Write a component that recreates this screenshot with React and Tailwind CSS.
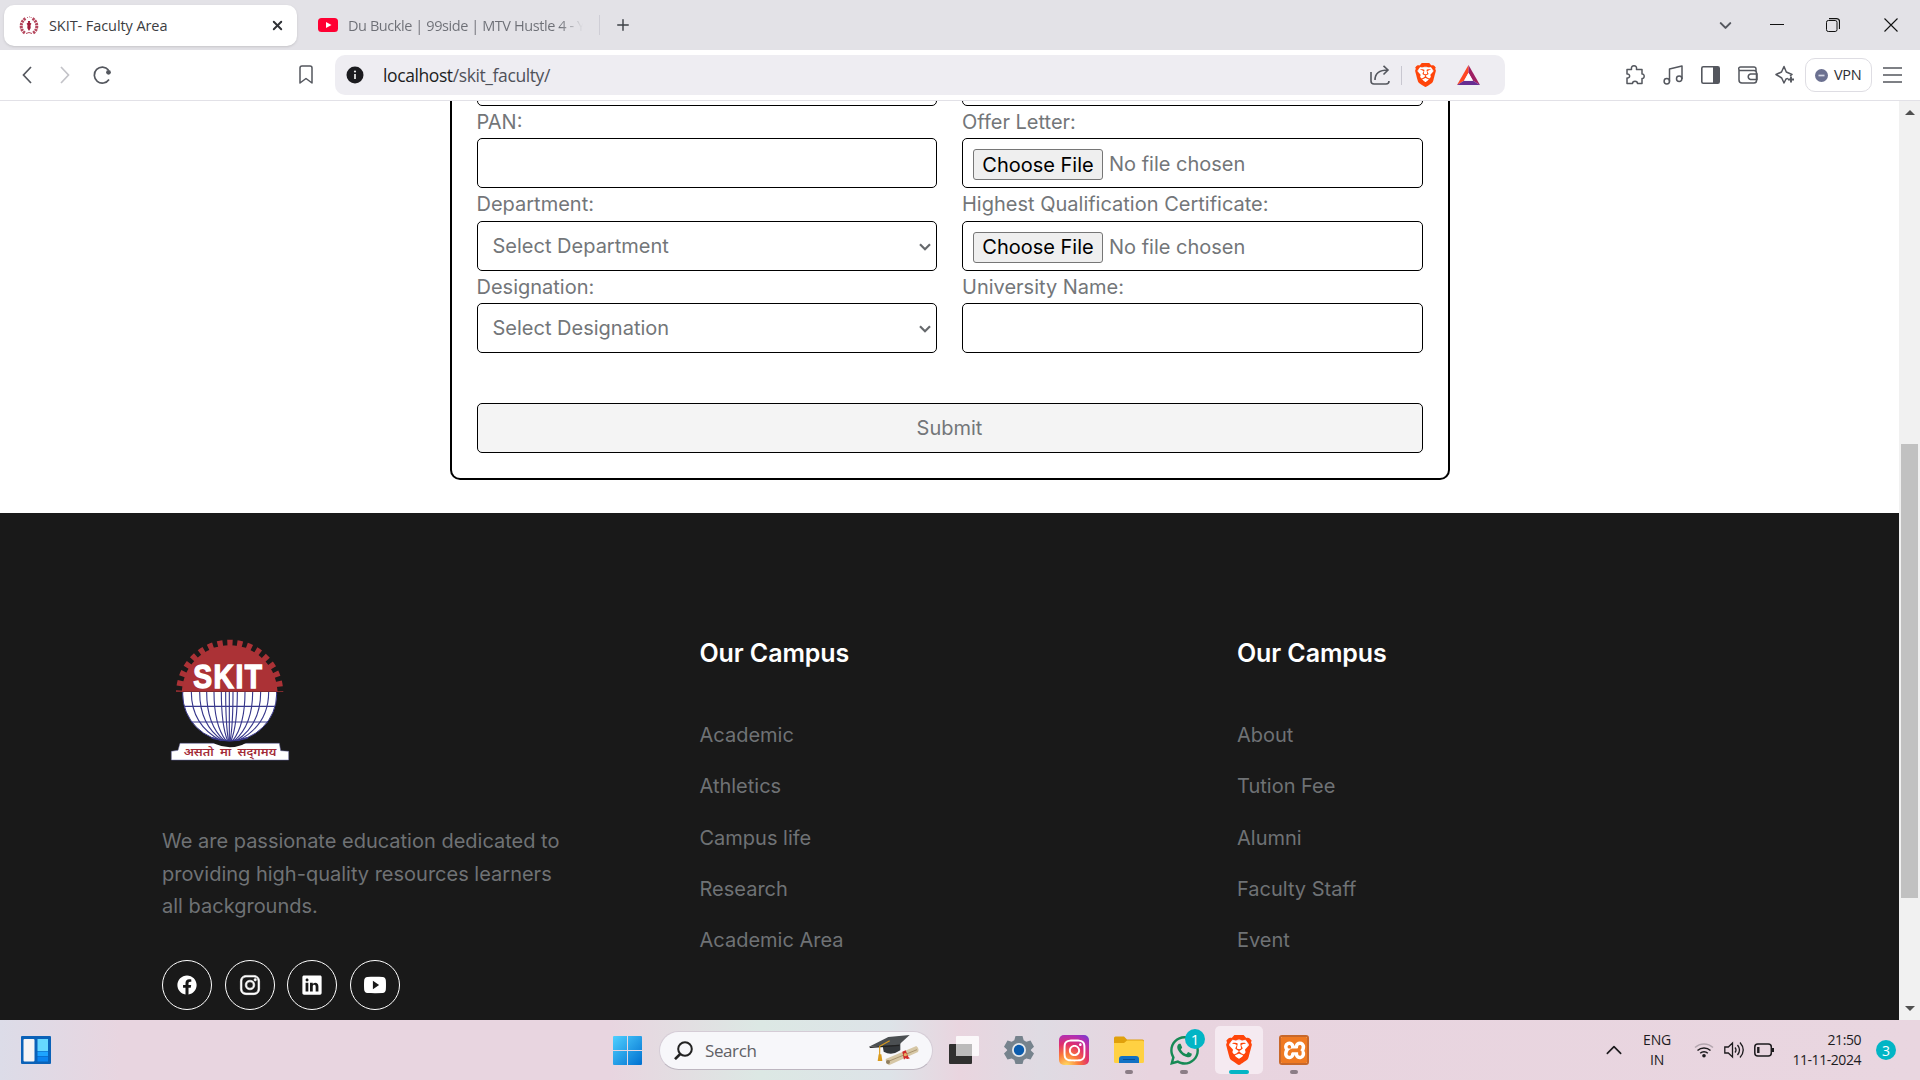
import React from "react";
import { IoLogoFacebook, IoLogoInstagram, IoLogoLinkedin, IoLogoYoutube } from "react-icons/io5";
import { SiBrave, SiXampp } from "react-icons/si";
import { FaWhatsapp, FaInstagram } from "react-icons/fa";
import { X, Plus, ChevronDown, ChevronUp } from "lucide-react";

const UI = "font-['Open_Sans','Noto_Sans',sans-serif]";

function Brave({ w, h }) {
  return (
    <svg width={w} height={h} viewBox="1.7 0 20.6 24" preserveAspectRatio="none">
      <path d="M6 5h12l1 5-3 7-4 3-4-3-3-7z" fill="#fff" />
      <SiBrave size={24} color="#ff450a" />
    </svg>
  );
}

function Favicon() {
  return (
    <svg width="20" height="20" viewBox="0 0 20 20" fill="none">
      <path d="M6.500 2.500C1 6 .5 14 6.500 17.500M13.500 2.500c5.500 3.500 6 11.500 0 15" stroke="#b5475d" strokeWidth="3" strokeDasharray="2.200 .8" />
      <path d="M8 1.500h.8M10 .8h.6M11.700 1.500h.8" stroke="#b5475d" strokeWidth="1.200" />
      <path d="M8.800 5h2.400l-.4 1.500 1.700 1.300-1 1.200.2 3L10 15l-1.700-3 .2-3-1-1.200L9.200 6.500z" fill="#a01c3a" />
      <path d="M7 17.500l3-1 3 1" stroke="#b5475d" />
    </svg>
  );
}

function TabStrip() {
  return (
    <div className={`flex h-[50px] items-center bg-[#e3e2e7] ${UI}`}>
      <div className="ml-1 mt-px flex h-[41px] w-[293px] items-center rounded-[10px] bg-white shadow-sm">
        <span className="ml-[15px]"><Favicon /></span>
        <span className="ml-[10px] w-[216px] whitespace-nowrap text-[14.5px] tracking-[-0.08px] text-[#3b3d42]">SKIT- Faculty Area</span>
        <X size={15} strokeWidth={3} className="ml-[5px] text-[#2f3136]" />
      </div>
      <svg className="ml-[21px]" width="20" height="14" viewBox="0 0 20 14">
        <rect width="20" height="14" rx="3.500" fill="#ff0033" />
        <path d="M8 4l5.500 3L8 10z" fill="#fff" />
      </svg>
      <span className="ml-[10px] mt-[2px] w-[240px] overflow-hidden whitespace-nowrap bg-gradient-to-r from-[#6d6f76] from-88% to-transparent to-98% bg-clip-text text-[14.5px] tracking-[-0.42px] text-transparent">
        Du Buckle | 99side | MTV Hustle 4 - Y
      </span>
      <span className="ml-[11px] h-5 w-px bg-[#cfced6]" />
      <Plus size={18} strokeWidth={1.900} className="ml-[14px] text-[#3d4046]" />
      <div className="ml-auto flex items-center text-[#111]">
        <ChevronDown size={19} strokeWidth={2.600} className="text-[#54575e]" />
        <svg className="ml-[35px]" width="14" height="14"><path d="M0 6.500h14" stroke="#111" /></svg>
        <svg className="ml-[42px]" width="14" height="14" fill="none" stroke="#111">
          <rect x=".5" y="2.500" width="10.500" height="11" rx="1.800" />
          <path d="M3 .6h7.500a3 3 0 0 1 3 3v7.400" strokeWidth="1.200" />
        </svg>
        <svg className="ml-[44px] mr-[22px]" width="14" height="14"><path d="M.5.5l13 13M13.500.5l-13 13" stroke="#111" strokeWidth="1.100" /></svg>
      </div>
    </div>
  );
}

function Toolbar() {
  return (
    <div className={`flex h-[51px] items-center border-b border-[#e2e1e7] bg-white ${UI}`}>
      <svg className="ml-[22px]" width="10" height="18" fill="none" stroke="#54575e" strokeWidth="1.700"><path d="M9 1L1.500 9 9 17" /></svg>
      <svg className="ml-[28px]" width="10" height="18" fill="none" stroke="#c3c3c8" strokeWidth="1.700"><path d="M1 1l7.500 8L1 17" /></svg>
      <svg className="ml-[22px]" width="20" height="20" fill="none" stroke="#54575e" strokeWidth="1.700">
        <path d="M16.500 5A8 8 0 1 0 17 14.500" />
        <circle cx="16.500" cy="7.300" r="2.400" fill="#54575e" stroke="none" />
      </svg>
      <svg className="ml-[187px]" width="14" height="20" fill="none" stroke="#54575e" strokeWidth="1.500" strokeLinejoin="round"><path d="M1 3a2 2 0 0 1 2-2h8a2 2 0 0 1 2 2v15l-6-4.500L1 18z" /></svg>
      <div className="ml-[22px] flex h-10 w-[1170px] items-center rounded-[10px] bg-[#eeedf2]">
        <svg className="ml-[11px]" width="18" height="18">
          <circle cx="9" cy="9" r="8.500" fill="#1b1b1f" />
          <path d="M9 8v5" stroke="#eee" strokeWidth="1.700" /><circle cx="9" cy="5.500" r="1.100" fill="#eee" />
        </svg>
        <span className="ml-[19px] w-[350px] text-[17.500px] tracking-[-0.4px] text-[#1d1d22]">localhost<span className="text-[#50525a]">/skit_faculty/</span></span>
        <svg className="ml-[637px]" width="20" height="20" fill="none" stroke="#54575e" strokeWidth="1.600">
          <path d="M1 7v9a3 3 0 0 0 3 3h12a3 3 0 0 0 3-3" />
          <path d="M5 15c0-6 4-10 13-10M13.500.8L18 5l-4.500 4.500" />
        </svg>
        <span className="ml-[11px] h-[19px] w-px bg-[#c8c7d0]" />
        <span className="ml-[13px]"><Brave w={21} h={24} /></span>
        <svg className="ml-[21px]" width="23" height="20" viewBox="0 0 23 20">
          <path d="M11.500 0L0 20l7-4.300 4.500-8z" fill="#ff4724" />
          <path d="M11.500 0L23 20l-7-4.300-4.500-8z" fill="#9e1f63" />
          <path d="M0 20h23l-7-4.300H7z" fill="#662d91" />
          <path d="M11.500 7.700l4.500 8H7z" fill="#fff" />
        </svg>
      </div>
      <div className="ml-[120px] flex items-center text-[#54575e]">
        <svg width="20" height="20" viewBox="0 0 20 20" fill="none" stroke="currentColor" strokeWidth="1.500">
          <path d="M2 4.500h4.500C6 1.500 7.500.8 9 .8s3 .7 2.500 3.700H17v4.500c3-.3 2.800 5 0 4.500v5h-4.500c0-3-5-3-5 0H2v-5.500c3.500.5 3.500-4.500 0-4z" strokeLinejoin="round" />
        </svg>
        <svg className="ml-[18px]" width="20" height="20" viewBox="0 0 20 20" fill="none" stroke="currentColor" strokeWidth="1.500">
          <path d="M6.500 16.500V4L19 1v13M6.500 8" strokeLinejoin="round" /><circle cx="3.800" cy="16.300" r="2.700" /><circle cx="16.200" cy="13.800" r="2.700" />
        </svg>
        <svg className="ml-[18px]" width="19" height="18" viewBox="0 0 19 18" fill="none" stroke="currentColor" strokeWidth="1.600">
          <rect x=".8" y=".8" width="17.400" height="16.400" rx="1.500" /><path d="M12 1h6v16h-6z" fill="currentColor" stroke="none" />
        </svg>
        <svg className="ml-[18px]" width="20" height="18" viewBox="0 0 20 18" fill="none" stroke="currentColor" strokeWidth="1.500">
          <path d="M1 3.500V14a3 3 0 0 0 3 3h12a2.500 2.500 0 0 0 2.500-2.500V7A2.500 2.500 0 0 0 16 4.500H2.500a1.800 1.800 0 0 1 0-3.600H16A2 2 0 0 1 18 3v2" />
          <path d="M19 8h-6.500a2.800 2.800 0 0 0 0 5.500H19z" />
        </svg>
        <svg className="ml-[17px]" width="20" height="20" viewBox="0 0 20 20" fill="none" stroke="currentColor" strokeWidth="1.500" strokeLinejoin="round">
          <path d="M13 13.500l-2 .5-2 4-2.300-5L1 9.500 6.500 7 9 1.500 11.300 7 17 9.500l-2 1.500" />
          <path d="M16 11.500v6M13 14.500h6" strokeWidth="1.900" />
        </svg>
        <div className="ml-[10px] flex h-[34px] w-[67px] items-center rounded-[10px] border border-[#dedde3]">
          <svg className="ml-[9px]" width="13" height="13"><circle cx="6.500" cy="6.500" r="6.500" fill="#6b7090" /><path d="M3.500 6.500h6" stroke="#d6d8e6" strokeWidth="1.700" /></svg>
          <span className="ml-[6px] text-[14.500px] tracking-[-0.3px] text-[#2c2e33]">VPN</span>
        </div>
        <svg className="ml-[11px]" width="19" height="16" stroke="currentColor" strokeWidth="1.500"><path d="M0 1h19M0 8h19M0 15h19" /></svg>
      </div>
    </div>
  );
}

const field = "block h-[50px] w-full rounded-[5px] border border-black bg-white";

function Field({ label, children }) {
  return (
    <label className="block">
      <span className="block h-[32.5px] leading-[32.500px]">{label}</span>
      {children}
    </label>
  );
}

function FileBox() {
  return (
    <span className={`${field} flex items-center pl-[10px]`}>
      <span className="mt-[3px] flex h-[31px] w-[130px] items-center justify-center rounded-[3px] border border-[#767676] bg-[#efefef] text-black">Choose File</span>
      <span className="ml-[6px] mt-[2px]">No file chosen</span>
    </span>
  );
}

function SelectBox({ text }) {
  return (
    <span className={`${field} flex items-center pl-[15px]`}>
      {text}
      <svg className="ml-auto mr-[5px] mt-[2px]" width="12" height="8" fill="none" stroke="#66696c" strokeWidth="2.200"><path d="M1 1.200l5 5 5-5" /></svg>
    </span>
  );
}

function Form() {
  return (
    <div className="ml-[449.5px] flex h-[379px] w-[1000px] flex-col rounded-b-[10px] border-2 border-t-0 border-black px-[25px] text-[20px] text-[#737679]">
      <div className="-mt-[45.5px] grid grid-cols-2 gap-x-[25px]">
        <div className={field} />
        <div className={field} />
        <Field label="PAN:"><span className={field} /></Field>
        <Field label="Offer Letter:"><FileBox /></Field>
        <Field label="Department:"><SelectBox text="Select Department" /></Field>
        <Field label="Highest Qualification Certificate:"><FileBox /></Field>
        <Field label="Designation:"><SelectBox text="Select Designation" /></Field>
        <Field label="University Name:"><span className={field} /></Field>
      </div>
      <button className="mt-[50px] h-[50px] shrink-0 rounded-[5px] border border-black bg-[#f4f4f4]">Submit</button>
    </div>
  );
}

function SchoolLogo() {
  const tops = [154, 179, 200, 222, 244, 257, 268, 279, 292, 315, 338, 362, 386];
  return (
    <svg width="138" height="160" viewBox="66 0 414 480">
      <defs>
        <clipPath id="upper"><rect x="60" y="40" width="420" height="175" /></clipPath>
        <clipPath id="lower"><rect x="60" y="216" width="420" height="160" /></clipPath>
      </defs>
      <g clipPath="url(#upper)">
        <circle cx="269" cy="220" r="144" fill="#ab3236" />
        <circle cx="269" cy="220" r="151" fill="none" stroke="#ab3236" strokeWidth="20" pathLength="32" strokeDasharray=".54 .46" strokeDashoffset=".27" />
      </g>
      <path d="M120 370H418l4 22 24 2v26H94v-26l20-3z" fill="#fff" stroke="#6a6aa8" strokeWidth="1.500" />
      <path d="M180 340q90 84 178 0z" fill="#191919" />
      <g clipPath="url(#lower)">
        <circle cx="269" cy="222" r="141" fill="#fff" stroke="#38388c" strokeWidth="3" />
        {tops.map((x) => (
          <path key={x} d={`M${x} 216C${x} 280 ${268 + (x - 268) * 0.75} 330 ${268 + (x - 268) * 0.22} 362`} fill="none" stroke="#38388c" strokeWidth="3.400" />
        ))}
        <path d="M134 259H404M154 306H384" stroke="#38388c" strokeWidth="3.400" />
        <path d="M215 354q54 16 108 0" fill="none" stroke="#38388c" strokeWidth="4" />
      </g>
      <text x="265" y="205" textAnchor="middle" textLength="210" fontSize="98" fontWeight="700" fontFamily="Liberation Sans, sans-serif" lengthAdjust="spacingAndGlyphs" letterSpacing="5" fill="#fff" stroke="#fff" strokeWidth="4">SKIT</text>
      <text x="270" y="408" textAnchor="middle" textLength="278" lengthAdjust="spacingAndGlyphs" wordSpacing="8" fontSize="33" fontWeight="600" fontFamily="Noto Sans Devanagari, Noto Sans, sans-serif" fill="#a32b38">{"असतो मा सद्\u200cगमय"}</text>
    </svg>
  );
}

function LinkColumn({ items }) {
  return (
    <div>
      <h4 className="mt-[124px] text-[25px] font-semibold leading-[32px] tracking-[-0.1px] text-white">Our Campus</h4>
      <ul className="mt-[50px] flex flex-col gap-[18.75px]">
        {items.map((t) => <li key={t} className="h-[32.5px] leading-[32.500px]">{t}</li>)}
      </ul>
    </div>
  );
}

const socials = [
  { Icon: IoLogoFacebook, weight: 0 },
  { Icon: IoLogoInstagram, weight: 14 },
  { Icon: IoLogoLinkedin, weight: 0 },
  { Icon: IoLogoYoutube, weight: 0 },
];

function Footer() {
  return (
    <footer className="mt-[33px] grid h-[507px] shrink-0 grid-cols-[512.5px_512.5px_512.5px] gap-x-[25px] overflow-hidden bg-[#191919] pl-[162px] text-[20px] text-[#6f7275]">
      <div className="pt-[107px]">
        <SchoolLogo />
        <p className="mt-[45px] w-[410px] leading-[32.500px]">We are passionate education dedicated to providing high-quality resources learners all backgrounds.</p>
        <div className="mt-[37px] flex gap-[12.5px] text-white">
          {socials.map(({ Icon, weight }, i) => (
            <span key={i} className="flex size-[50px] items-center justify-center rounded-full border border-white"><Icon size={22} strokeWidth={weight} /></span>
          ))}
        </div>
      </div>
      <LinkColumn items={["Academic", "Athletics", "Campus life", "Research", "Academic Area"]} />
      <LinkColumn items={["About", "Tution Fee", "Alumni", "Faculty Staff", "Event"]} />
    </footer>
  );
}

function Scrollbar() {
  return (
    <div className="flex w-[21px] flex-col items-center bg-[#f1f1f1]">
      <svg className="mt-[9px]" width="10" height="5"><path d="M5 0l5 5H0z" fill="#505050" /></svg>
      <div className="mt-[329px] h-[454px] w-[17px] bg-[#c1c1c1]" />
      <svg className="mb-[9px] mt-auto" width="10" height="5"><path d="M0 0h10L5 5z" fill="#505050" /></svg>
    </div>
  );
}

function CapIcon() {
  return (
    <svg width="50" height="32" viewBox="0 0 150 96">
      <path d="M40 26l54-4v24q-26 18-50 4z" fill="#33373b" />
      <path d="M0 35L58 6 122 0 90 29z" fill="#4b4f52" /><path d="M0 35l90-6 2 4-88 6z" fill="#222" />
      <path d="M62 17L32 34v28" stroke="#d99a1b" strokeWidth="3.500" fill="none" /><path d="M29 58h8l3 20H26z" fill="#d99a1b" />
      <path d="M50 72l92-39q10 8 5 18L60 91q-10-6-10-19z" fill="#d6c7a6" /><path d="M56 80l88-36" stroke="#a8946f" strokeWidth="3" />
      <circle cx="57" cy="81" r="6" fill="#8f7e5f" />
      <path d="M100 50l10-4 8 20 5 4-8 2-6-2-4 4z" fill="#cf2a2a" /><circle cx="109" cy="59" r="5" fill="#e0b060" />
    </svg>
  );
}

function TaskIcon({ children, dot }) {
  return (
    <div className="flex h-[60px] w-[30px] flex-col items-center pt-[15px]">
      <div className="flex size-[30px] items-center justify-center">{children}</div>
      {dot && <span className="mt-[5px] h-1 w-2 rounded-full bg-[#8b7d86]" />}
    </div>
  );
}

function Taskbar() {
  return (
    <div className={`flex h-[60px] items-center bg-[linear-gradient(90deg,#dcdce8_0,#e8d5e0_120px,#e8d5e0_610px,#e2dfe2_690px,#dce8e4_760px,#dde3e8_890px,#e9d5df_960px,#dfdbe3_1040px,#e8d4df_1150px,#e9d6e0_1920px)] text-[#1d1b1e] ${UI}`}>
      <svg className="ml-[21px]" width="30" height="28">
        <rect width="30" height="28" rx="1" fill="#0a62b8" />
        <rect x="2.500" y="3" width="11" height="22.500" rx="1" fill="#f5f5f5" />
        <path d="M16.500 3H27v12H16.500z" fill="#66d8ff" /><path d="M16.500 15.500H27V20H16.500z" fill="#1ea5ff" /><path d="M16.500 20.500H27v5H16.500z" fill="#0b84ef" />
      </svg>
      <svg className="ml-[562px]" width="29" height="29">
        <defs><linearGradient id="win" x1="0" y1="0" x2="1" y2="1"><stop stopColor="#4fd0ff" /><stop offset="1" stopColor="#0070d0" /></linearGradient></defs>
        <path d="M0 1q0-1 1-1h13v14H0zM15 0h13q1 0 1 1v13H15zM0 15h14v14H1q-1 0-1-1zM15 15h14v13q0 1-1 1H15z" fill="url(#win)" />
      </svg>
      <div className="ml-[17px] flex h-[39px] w-[274px] items-center rounded-full border border-[#d5ccd6] border-b-[#bdb6c0] bg-[#f7f7fa]">
        <svg className="ml-[14px]" width="19" height="19" fill="none" stroke="#222" strokeWidth="2"><circle cx="11" cy="8" r="6.800" /><path d="M6.200 13L1 18.200" strokeWidth="2.600" /></svg>
        <span className="ml-[12px] mt-px w-[60px] text-[17px] tracking-[-0.4px] text-[#606065]">Search</span>
        <span className="ml-[104px] mt-[2px]"><CapIcon /></span>
      </div>
      <div className="ml-4 flex gap-[25px]">
        <TaskIcon>
          <svg width="30" height="30"><rect y="9" width="23" height="20" rx="1" fill="#30302f" /><rect x="7" y="1" width="23" height="20" rx="1" fill="#fff" fillOpacity=".82" /><path d="M7 9h16v12H7z" fill="#bcbbbb" /></svg>
        </TaskIcon>
        <TaskIcon>
          <svg width="30" height="30" viewBox="0 0 30 30">
            <path d="M11.500 1h7l1.200 4.200 2.600 1.500L26.500 5.600 30 11.700 26.900 14.800v.8L30 18.500l-3.500 6-4.200-1.100-2.600 1.500L18.500 29h-7l-1.200-4.100-2.600-1.500-4.200 1.100L0 18.500l3.100-2.900v-.8L0 11.700l3.500-6.100 4.200 1.100 2.600-1.500z" fill="#76838d" />
            <circle cx="15" cy="15" r="7" fill="#e4e8ec" /><circle cx="15" cy="15" r="5.200" fill="#0b5cad" />
          </svg>
        </TaskIcon>
        <TaskIcon>
          <span className="flex size-[30px] items-center justify-center rounded-[5px] bg-[radial-gradient(circle_at_25%_105%,#ffd560_5%,#fb7a3a_32%,#e1306c_58%,#b42fb0_80%,#6a3fd8_100%)] text-white"><FaInstagram size={25} /></span>
        </TaskIcon>
        <TaskIcon dot>
          <svg width="30" height="28">
            <path d="M0 2q0-1.500 1.500-1.500H10l3 3H28.500q1.500 0 1.500 1.500v5H0z" fill="#e0a00c" />
            <path d="M0 7h10l3-2.500h15.500Q30 4.500 30 6v19.500q0 1.500-1.500 1.500h-27Q0 27 0 25.500z" fill="#ffd142" />
            <path d="M5 27v-4q0-3 3-3h14q3 0 3 3v4z" fill="#1271c4" /><path d="M9 23.500h12" stroke="#0a4f92" />
          </svg>
        </TaskIcon>
        <div className="relative">
          <TaskIcon dot><FaWhatsapp size={33} className="shrink-0 text-[#178a55]" /></TaskIcon>
          <span className="absolute left-4 top-[9px] flex size-5 items-center justify-center rounded-full bg-[#02b5c5] text-[15px] text-white">1</span>
        </div>
        <div className="-mx-[9px] mt-[6px] flex h-12 w-12 flex-col items-center rounded-[5px] bg-[#f5eaf1] pt-[9px]">
          <Brave w={26} h={30} />
          <span className="mt-[5px] h-1 w-5 rounded-full bg-[#02b5c5]" />
        </div>
        <TaskIcon dot>
          <span className="flex size-[30px] items-center justify-center overflow-hidden rounded-[3px] border-2 border-[#c8682a] bg-white">
            <SiXampp size={29} className="shrink-0 text-[#ef7a22]" />
          </span>
        </TaskIcon>
      </div>
      <ChevronUp className="ml-[295px]" size={20} strokeWidth={1.500} viewBox="3 3 18 18" />
      <div className="ml-[13px] w-10 text-center text-[14px] leading-[20px] tracking-[-0.2px]">ENG<br />IN</div>
      <svg className="ml-[17px]" width="20" height="16" fill="none" stroke="#1d1b1e" strokeWidth="1.500">
        <path d="M1 5.500a13 13 0 0 1 18 0" stroke="#b3a6ae" /><path d="M3.500 8.500a9.500 9.500 0 0 1 13 0M6.200 11.300a5.500 5.500 0 0 1 7.600 0" /><circle cx="10" cy="13.800" r="1.800" fill="#1d1b1e" stroke="none" />
      </svg>
      <svg className="ml-[10px]" width="21" height="18" fill="none" stroke="#1d1b1e" strokeWidth="1.300"><path d="M.8 6h3.500L8.500 2v14L4.300 12H.8zM11 6.500q2 2.500 0 5M13.500 4q4 5 0 10M16 1.500q6.500 7.500 0 15" /></svg>
      <svg className="ml-[9px]" width="21" height="14" fill="none" stroke="#1d1b1e" strokeWidth="1.500"><rect x=".8" y="1" width="16.500" height="12" rx="3" /><path d="M4.300 4v6" strokeWidth="2.400" /><path d="M19 5v4" strokeWidth="2" /></svg>
      <div className="w-[86px] whitespace-nowrap text-right text-[14px] leading-[20px] tracking-[-0.45px]">21:50<br />11-11-2024</div>
      <span className="ml-[15px] flex size-5 items-center justify-center rounded-full bg-[#02b5c5] text-[14px] text-white">3</span>
    </div>
  );
}

export default function App() {
  return (
    <div className="flex h-[1080px] w-[1920px] flex-col overflow-hidden bg-white">
      <TabStrip />
      <Toolbar />
      <div className="flex h-[919px] shrink-0 overflow-hidden">
        <main className="flex w-[1899px] flex-col overflow-hidden font-['Inter',sans-serif]">
          <Form />
          <Footer />
        </main>
        <Scrollbar />
      </div>
      <Taskbar />
    </div>
  );
}
